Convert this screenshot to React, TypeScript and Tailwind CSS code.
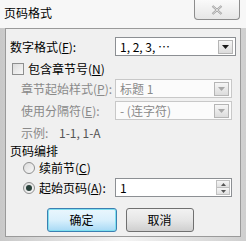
import React from "react";

const font = { fontFamily: '"Noto Sans CJK SC", "Liberation Sans", sans-serif' };

function DropBtn({ disabled }: { disabled?: boolean }) {
  return (
    <div className="w-[15px] h-[14px] border border-[#b5b5b5] bg-gradient-to-b from-[#f6f6f6] to-[#dcdcdc] flex items-center justify-center">
      <svg width="7" height="4" viewBox="0 0 7 4">
        <path d="M0 0 H7 L3.5 4 Z" fill={disabled ? "#a8a8a8" : "#1a1a1a"} />
      </svg>
    </div>
  );
}

function Combo({ text, disabled, w }: { text: string; disabled?: boolean; w: string }) {
  return (
    <div
      className={`${w} h-[19px] border ${disabled ? "border-[#c8c8c8] bg-[#fbfbfb] text-[#8a8a8a]" : "border-[#8c8f93] bg-white text-black"} flex items-center justify-between pl-[4px] pr-[2px] text-[12px] leading-none`}
    >
      <span>{text}</span>
      <DropBtn disabled={disabled} />
    </div>
  );
}

function Radio({ checked }: { checked?: boolean }) {
  return (
    <div className="w-[12px] h-[12px] rounded-full border border-[#8e8f8f] bg-gradient-to-br from-[#dcdcdc] to-[#f8f8f8] flex items-center justify-center">
      {checked && <div className="w-[6px] h-[6px] rounded-full bg-[#28403a]" />}
    </div>
  );
}

export default function App() {
  return (
    <div
      className="w-[246px] h-[241px] bg-gradient-to-r from-[#c9c9c9] via-[#f4f4f4] to-[#cfcfcf] flex flex-col text-[12px] text-black overflow-hidden"
      style={font}
    >
      {/* title bar */}
      <div className="h-[28px] flex justify-between bg-[#f7f7f7] shrink-0">
        <div className="pl-[4px] pt-[6px] text-[12px] leading-[14px]">页码格式</div>
        <div className="mr-[6px] w-[46px] h-[20px] border border-t-0 border-[#8d8d8d] rounded-b-[4px] bg-gradient-to-b from-[#fafafa] to-[#e6e6e6] flex items-center justify-center">
          <svg width="12" height="10" viewBox="0 0 12 10">
            <path d="M1.5 1 L10.5 9 M10.5 1 L1.5 9" stroke="#9a9a9a" strokeWidth="2.2" fill="none" />
            <path d="M1.5 1 L10.5 9 M10.5 1 L1.5 9" stroke="#f3f3f3" strokeWidth="0.8" fill="none" />
          </svg>
        </div>
      </div>
      {/* body panel */}
      <div className="mx-[5px] mb-[4px] flex-1 border border-[#9a9a9a] bg-[#f0f0f0] flex flex-col pl-[4px]">
        <div className="flex items-center mt-[8px]">
          <span className="w-[105px] leading-[14px]">数字格式(<u>F</u>):</span>
          <Combo text="1, 2, 3, …" w="w-[121px]" />
        </div>
        <div className="flex items-center mt-[6px] ml-[2px] gap-[4px] h-[14px]">
          <div className="w-[12px] h-[12px] border border-[#8e8f8f] bg-gradient-to-br from-[#dcdcdc] to-[#f8f8f8]" />
          <span className="leading-[14px]">包含章节号(<u>N</u>)</span>
        </div>
        <div className="flex items-center mt-[3px] text-[#8a8a8a]">
          <span className="w-[105px] pl-[11px] leading-[14px]">章节起始样式(<u>P</u>):</span>
          <Combo text="标题 1" w="w-[117px]" disabled />
        </div>
        <div className="flex items-center mt-[3px] text-[#8a8a8a]">
          <span className="w-[105px] pl-[11px] leading-[14px]">使用分隔符(<u>E</u>):</span>
          <Combo text="-  (连字符)" w="w-[117px]" disabled />
        </div>
        <div className="flex items-center mt-[6px] pl-[11px] leading-[14px]">
          <span className="text-[#8a8a8a] w-[38px]">示例:</span>
          <span className="text-[#555]">1-1, 1-A</span>
        </div>
        <div className="mt-[4px] leading-[14px]">页码编排</div>
        <div className="flex items-center mt-[3px] ml-[13px] gap-[4px] h-[14px]">
          <Radio />
          <span className="leading-[14px]">续前节(<u>C</u>)</span>
        </div>
        <div className="flex items-center mt-[3px]">
          <div className="w-[105px] flex items-center gap-[4px] pl-[13px]">
            <Radio checked />
            <span className="leading-[14px]">起始页码(<u>A</u>):</span>
          </div>
          <div className="w-[117px] h-[19px] border border-[#8c8f93] bg-white flex items-center justify-between pl-[4px] pr-[1px]">
            <span className="leading-none">1</span>
            <div className="w-[14px] h-[15px] flex flex-col border border-[#c0c0c0]">
              <div className="flex-1 bg-gradient-to-b from-[#f6f6f6] to-[#e0e0e0] flex items-center justify-center border-b border-[#c0c0c0]">
                <svg width="5" height="3" viewBox="0 0 5 3"><path d="M0 3 L2.5 0 L5 3 Z" fill="#555" /></svg>
              </div>
              <div className="flex-1 bg-gradient-to-b from-[#f6f6f6] to-[#e0e0e0] flex items-center justify-center">
                <svg width="5" height="3" viewBox="0 0 5 3"><path d="M0 0 L5 0 L2.5 3 Z" fill="#555" /></svg>
              </div>
            </div>
          </div>
        </div>
        <div className="flex justify-center gap-[9px] mt-[11px] pr-[10px]">
          <div className="w-[70px] h-[24px] rounded-[3px] border border-[#3c7fb1] shadow-[inset_0_0_0_1px_#7fe0f0] bg-gradient-to-b from-[#eaf6fd] via-[#d9f0fc] to-[#a7d9f5] flex items-center justify-center">
            确定
          </div>
          <div className="w-[68px] h-[24px] rounded-[3px] border border-[#707070] bg-gradient-to-b from-[#f2f2f2] via-[#e6e6e6] to-[#cfcfcf] flex items-center justify-center">
            取消
          </div>
        </div>
      </div>
    </div>
  );
}
